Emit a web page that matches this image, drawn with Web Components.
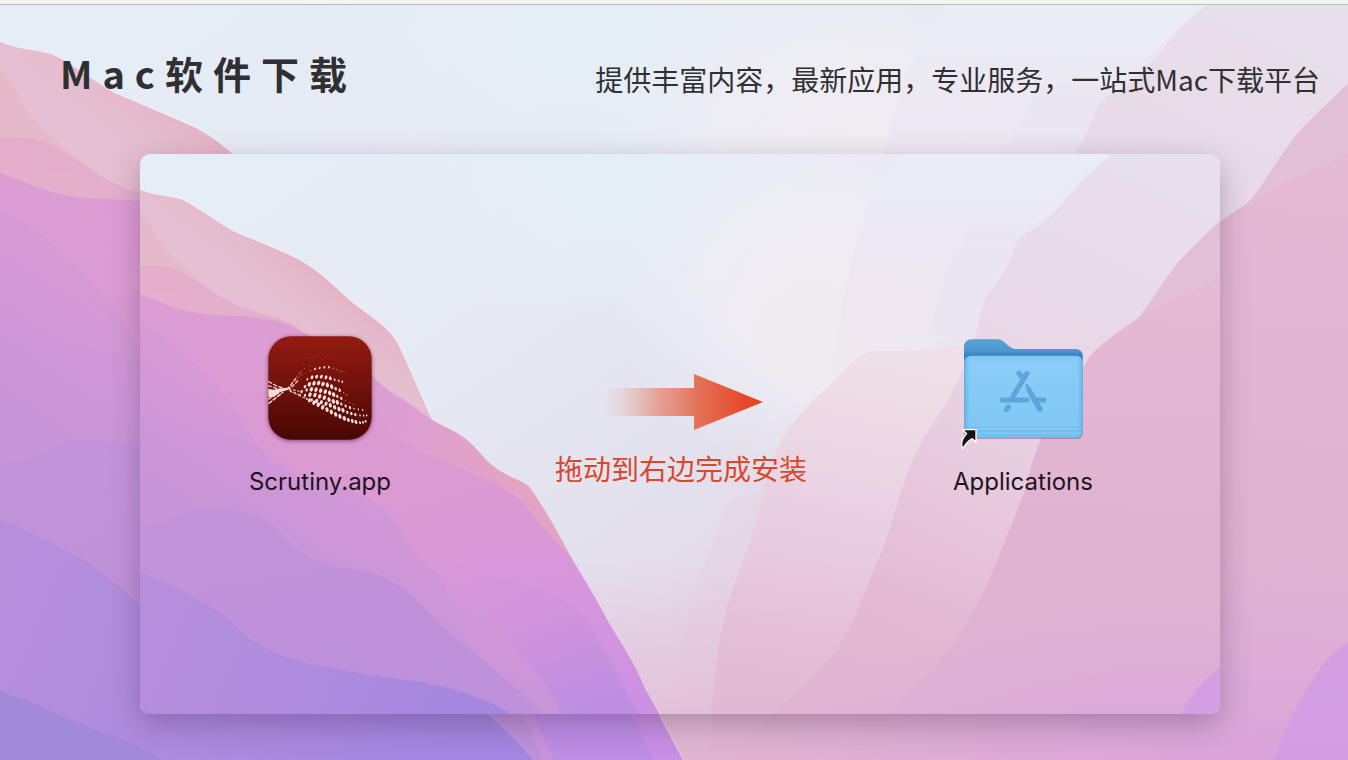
<!DOCTYPE html>
<html lang="zh-CN">
<head>
<meta charset="utf-8">
<title>Mac软件下载</title>
<style>
  html, body { margin: 0; }
  body { min-height: 100vh; display: flex; font-family: "Noto Sans CJK SC", sans-serif; color: #303033; }
</style>
</head>
<body>
<installer-page></installer-page>

<template id="wallpaper">
  <style>
    :host { display: block; overflow: hidden; }
    svg { display: block; width: 100%; height: 100%; }
  </style>
  <svg aria-hidden="true" preserveAspectRatio="none">
    <defs>
      <linearGradient id="sky" gradientUnits="userSpaceOnUse" x1="300" y1="150" x2="720" y2="760">
        <stop offset="0" stop-color="#e5edf6"/><stop offset=".35" stop-color="#e6e9f4"/>
        <stop offset=".62" stop-color="#e3e2ee"/><stop offset="1" stop-color="#e5d0e3"/>
      </linearGradient>
      <radialGradient id="blue"><stop offset="0" stop-color="#e4eff6"/><stop offset="1" stop-color="#e4eff6" stop-opacity="0"/></radialGradient>
      <radialGradient id="glow"><stop offset="0" stop-color="#f1eff4"/><stop offset=".5" stop-color="#f0eff5" stop-opacity=".7"/><stop offset="1" stop-color="#f1eff4" stop-opacity="0"/></radialGradient>
      <radialGradient id="petal" gradientUnits="userSpaceOnUse" cx="820" cy="330" r="170">
        <stop offset="0" stop-color="#f0eaf0"/><stop offset=".6" stop-color="#efecf3" stop-opacity=".7"/><stop offset="1" stop-color="#f0eef3" stop-opacity="0"/>
      </radialGradient>
      <linearGradient id="pale" gradientUnits="userSpaceOnUse" x1="860" y1="360" x2="790" y2="700">
        <stop offset="0" stop-color="#efdfe7"/><stop offset=".45" stop-color="#e9d0e1"/><stop offset="1" stop-color="#e3bcd4"/>
      </linearGradient>
      <linearGradient id="mist" gradientUnits="userSpaceOnUse" x1="900" y1="160" x2="900" y2="400">
        <stop offset="0" stop-color="#e9edf6"/><stop offset=".4" stop-color="#ede7f1"/><stop offset="1" stop-color="#efe0ea" stop-opacity="0"/>
      </linearGradient>
      <linearGradient id="r1" gradientUnits="userSpaceOnUse" x1="1120" y1="160" x2="860" y2="720">
        <stop offset="0" stop-color="#e7dfea"/><stop offset=".35" stop-color="#e9d7e6"/><stop offset=".6" stop-color="#e7c8dc"/><stop offset=".8" stop-color="#e4bad3"/><stop offset="1" stop-color="#e0b2d0"/>
      </linearGradient>
      <linearGradient id="r3" gradientUnits="userSpaceOnUse" x1="1150" y1="300" x2="1120" y2="764">
        <stop offset="0" stop-color="#e5b9d4"/><stop offset=".5" stop-color="#e0b4d0"/><stop offset="1" stop-color="#dbaad5"/>
      </linearGradient>
      <linearGradient id="floor" x1="0" y1="0" x2="0" y2="1">
        <stop offset="0" stop-color="#e2b8d3" stop-opacity="0"/><stop offset=".6" stop-color="#e2b8d3" stop-opacity=".55"/><stop offset="1" stop-color="#dfaed0"/>
      </linearGradient>
      <radialGradient id="dusk"><stop offset="0" stop-color="#d9a3dc"/><stop offset="1" stop-color="#d9a3dc" stop-opacity="0"/></radialGradient>
      <linearGradient id="a" gradientUnits="userSpaceOnUse" x1="250" y1="330" x2="320" y2="240">
        <stop offset="0" stop-color="#e5bfd4"/><stop offset=".5" stop-color="#e5bdcf"/><stop offset="1" stop-color="#e5abbe"/>
      </linearGradient>
      <linearGradient id="b" gradientUnits="userSpaceOnUse" x1="150" y1="400" x2="500" y2="520">
        <stop offset="0" stop-color="#dc9cd4"/><stop offset=".65" stop-color="#dd9fd3"/><stop offset="1" stop-color="#e3a3c5"/>
      </linearGradient>
      <linearGradient id="c" gradientUnits="userSpaceOnUse" x1="480" y1="470" x2="560" y2="764">
        <stop offset="0" stop-color="#db9ad1"/><stop offset=".45" stop-color="#d796dc"/><stop offset="1" stop-color="#c890e4"/>
      </linearGradient>
      <linearGradient id="c2" gradientUnits="userSpaceOnUse" x1="450" y1="540" x2="530" y2="740">
        <stop offset="0" stop-color="#d998d1" stop-opacity=".1"/><stop offset="1" stop-color="#bd8de4"/>
      </linearGradient>
      <linearGradient id="d" gradientUnits="userSpaceOnUse" x1="400" y1="340" x2="220" y2="600">
        <stop offset="0" stop-color="#dc9bd3"/><stop offset=".45" stop-color="#d499d6"/><stop offset="1" stop-color="#c292da"/>
      </linearGradient>
      <linearGradient id="e" gradientUnits="userSpaceOnUse" x1="220" y1="510" x2="300" y2="680">
        <stop offset="0" stop-color="#c393da"/><stop offset="1" stop-color="#bd90db"/>
      </linearGradient>
      <linearGradient id="f" gradientUnits="userSpaceOnUse" x1="160" y1="600" x2="500" y2="740">
        <stop offset="0" stop-color="#b68edc"/><stop offset=".6" stop-color="#ab8adf"/><stop offset="1" stop-color="#a386e1"/>
      </linearGradient>
    </defs>
    <rect x="130" y="140" width="1110" height="640" fill="url(#sky)"/>
    <ellipse cx="610" cy="180" rx="220" ry="150" fill="url(#blue)"/>
    <ellipse cx="830" cy="290" rx="220" ry="190" fill="url(#glow)"/>
    <path fill="url(#petal)" d="M640 150C660 230 676 255 693 281C715 315 735 338 757 364C770 380 776 390 785 396C795 404 815 404 835 392L960 330V150Z"/>
    <path fill="url(#mist)" d="M898 150C894 172 880 178 875 190C868 215 855 240 850 270C840 310 836 340 835 400L1000 400L1120 140H898Z"/>
    <path fill="#e9e4f1" opacity=".4" d="M1107 154L1041 224L968 224C964 250 952 256 947 270C938 300 935 320 925 335L975 337L1018 241Z"/>
    <path fill="#e7cfe0" opacity=".4" d="M730 500C705 555 702 580 690 604C680 630 678 690 672 764H800V480Z"/>
    <path fill="url(#pale)" d="M940 348C900 354 880 348 863 354C847 365 838 378 820 394C800 412 785 432 777 450C765 478 760 500 756 524C745 556 732 590 727 607C718 640 712 690 706 780H960L1000 340Z"/>
    <path fill="url(#r1)" d="M1116 150C1105 160 1100 165 1087 175C1070 195 1056 212 1041 224C1028 232 1022 234 1018 241C1012 252 1012 258 1006 268C996 286 985 296 983 306C978 325 974 345 964 368C953 392 942 410 929 430C917 448 910 465 906 478C896 503 890 535 880 555C868 583 860 608 849 629C840 650 820 670 800 690C770 715 740 740 715 780H1240V150Z"/>
    <path fill="#e2bfd6" d="M1240 200C1210 232 1190 248 1175 266C1160 286 1150 304 1137 319L1240 300Z"/>
    <path fill="url(#r3)" d="M1240 266C1210 285 1185 294 1167 302L1137 319C1120 330 1103 342 1090 356C1070 388 1055 415 1041 438C1030 464 1030 475 1024 492C1015 516 1010 528 1003 545C988 585 970 625 940 660C910 695 870 730 830 780H1240Z"/>
    <rect x="540" y="560" width="700" height="220" fill="url(#floor)"/>
    <ellipse cx="1180" cy="780" rx="420" ry="170" fill="url(#dusk)"/>
    <path fill="#d09be6" d="M1240 655C1218 667 1205 680 1198 687C1188 702 1172 725 1152 780H1240Z" opacity=".75"/>

    <path fill="url(#a)" stroke="#f1edf3" stroke-width="1" d="M130 184C143 191 150 193 157 194C168 196 175 197 182 199C200 208 216 221 232 230C255 240 278 249 297 258C320 270 337 289 355 304C369 314 390 328 398 343C410 367 422 398 433 420V770H130Z"/>
    <path fill="#e5b6c4" opacity=".65" d="M130 203C145 215 150 225 160 242C174 263 196 278 220 296L130 290Z"/>
    <path fill="#e3aac8" opacity=".75" d="M130 266C155 266 170 265 185 274C205 286 224 302 250 310C268 315 285 319 300 328L280 370H130Z"/>
    <path fill="url(#b)" d="M130 291C155 298 170 308 192 312C213 317 234 314 250 317C276 319 287 323 303 332C322 340 330 350 345 360C355 367 362 366 373 376C385 388 390 393 403 399C416 408 422 413 433 420C445 427 454 430 461 435C475 444 482 456 490 463C508 478 522 479 530 487C545 507 560 536 572 558L580 770H130Z"/>
    <path fill="url(#c)" d="M365 378C375 405 383 430 403 442C424 455 445 460 470 472C500 484 520 496 530 511C545 532 560 545 572 558C585 580 600 603 610 624C620 640 635 662 645 687L660 714L690 770H130V400Z"/>
    <path fill="url(#c2)" d="M400 520C440 560 480 575 530 585C560 595 580 611 595 633C613 662 626 694 640 717L666 770H300V500Z"/>
    <path fill="url(#d)" d="M130 321C155 329 172 341 187 356C200 369 210 375 220 388C237 409 244 422 253 437C265 455 273 463 290 472C320 484 350 487 365 498C391 508 405 532 412 548C420 566 436 570 446 580C475 610 525 650 555 700L590 780H130Z" opacity=".85"/>
    <path fill="#c494d9" opacity=".22" d="M130 414C160 422 200 435 230 437C260 442 275 458 298 470C330 489 365 490 380 507C410 530 403 550 440 574L470 650L130 620Z"/>
    <path fill="url(#e)" d="M130 527C165 529 180 510 200 508C222 506 250 511 268 521C282 530 285 541 300 551C330 572 363 565 384 577C412 589 427 613 450 633C480 656 520 690 560 730L580 780H130Z" opacity=".85"/>
    <path fill="url(#f)" d="M130 569C158 577 178 588 207 604C235 620 242 637 270 650C296 663 325 666 355 672C389 679 423 680 450 688C474 695 497 704 510 714C530 726 548 742 566 764L570 780H130Z"/>
    <path fill="#a18ad7" opacity=".9" d="M130 707C155 712 172 721 193 730C215 740 240 746 270 764V780H130Z"/>
    <path fill="none" stroke="#eee8f2" stroke-width="1" opacity=".5" d="M433 420C445 427 454 430 461 435C475 444 482 456 490 463C508 478 522 479 530 487C545 507 560 536 572 558C585 580 600 603 610 624C620 640 635 662 645 687L660 714L690 770"/>
  </svg>
</template>

<template id="page">
  <style>
    :host { flex: 1; display: grid; grid-template-rows: 5px 149px 1fr; min-width: 0; }
    .strip { grid-area: 1 / 1; background: #f3f6ec; border-bottom: 1px solid #b9bdca; z-index: 1; }
    wall-paper { grid-area: 1 / 1 / -1 / 1; }
    page-header { grid-area: 2 / 1; z-index: 1; }
    install-panel { grid-area: 3 / 1; margin: 0 128px 46px 140px; z-index: 1; }
  </style>
  <wall-paper view="140 156 1078 608"></wall-paper>
  <div class="strip"></div>
  <page-header>
    <span slot="title">Mac软件下载</span>
    <span slot="tagline">提供丰富内容，最新应用，专业服务，一站式Mac下载平台</span>
  </page-header>
  <install-panel>
    <install-item slot="source"><app-icon></app-icon><span slot="label">Scrutiny.app</span></install-item>
    <drag-hint slot="hint">拖动到右边完成安装</drag-hint>
    <install-item slot="target"><folder-icon></folder-icon><span slot="label">Applications</span></install-item>
  </install-panel>
</template>

<template id="header">
  <style>
    :host { display: block; }
    header { display: flex; justify-content: space-between; align-items: flex-start; padding: 38px 28px 0 60px; }
    h1, p { margin: 0; white-space: nowrap; }
    h1 { font-size: 38px; line-height: 60px; font-weight: 700; letter-spacing: 10px; }
    p { font-size: 28px; line-height: 72px; }
  </style>
  <header>
    <h1><slot name="title"></slot></h1>
    <p><slot name="tagline"></slot></p>
  </header>
</template>

<template id="panel">
  <style>
    :host { display: grid; border-radius: 10px; box-shadow: 0 10px 30px rgba(50, 25, 60, .3); }
    wall-paper { grid-area: 1 / 1; border-radius: inherit; }
    main { grid-area: 1 / 1; z-index: 1; display: grid; grid-template-columns: 360fr 362fr 322fr; justify-items: center; align-items: start; padding: 182px 36px 0 0; }
  </style>
  <wall-paper view="140 154 1080 560"></wall-paper>
  <main>
    <slot name="source"></slot>
    <slot name="hint"></slot>
    <slot name="target"></slot>
  </main>
</template>

<template id="item">
  <style>
    :host { display: block; }
    figure { margin: 0; display: grid; grid-template-rows: 114px 32px; row-gap: 16px; justify-items: center; }
    figcaption { font: 24px/32px Inter, sans-serif; color: #1d1420; white-space: nowrap; }
  </style>
  <figure>
    <slot></slot>
    <figcaption><slot name="label"></slot></figcaption>
  </figure>
</template>

<template id="hint">
  <style>
    :host { display: grid; justify-items: center; row-gap: 18px; padding-top: 38px; }
    svg { display: block; }
    p { margin: 0; font-size: 28px; line-height: 40px; color: #d9482c; white-space: nowrap; }
  </style>
  <svg width="164" height="56" viewBox="-4 0 164 56" aria-hidden="true">
    <defs><linearGradient id="g" gradientUnits="userSpaceOnUse" x1="0" y1="0" x2="160" y2="0">
      <stop offset="0" stop-color="#e88870" stop-opacity="0"/><stop offset=".12" stop-color="#e68b78" stop-opacity=".18"/>
      <stop offset=".35" stop-color="#e67c64" stop-opacity=".65"/><stop offset=".6" stop-color="#e4694d" stop-opacity=".94"/>
      <stop offset=".9" stop-color="#e54725"/><stop offset="1" stop-color="#e54725"/>
    </linearGradient></defs>
    <path fill="url(#g)" d="M0 14H91V0L160 28L91 56V42H0Z"/>
  </svg>
  <p><slot></slot></p>
</template>

<template id="app">
  <style>
    :host { display: block; }
    svg { display: block; filter: drop-shadow(0 1px 2px rgba(40, 0, 20, .55)); }
  </style>
  <svg width="104" height="104" viewBox="54 48 312 312" role="img" aria-label="Scrutiny">
    <defs>
      <linearGradient id="g" x1="0" y1="0" x2="0" y2="1"><stop offset="0" stop-color="#931b11"/><stop offset=".5" stop-color="#70110b"/><stop offset="1" stop-color="#480703"/></linearGradient>
      <clipPath id="k"><rect x="55" y="49" width="310" height="310" rx="68"/></clipPath>
    </defs>
    <rect x="55" y="49" width="310" height="310" rx="68" fill="url(#g)"/>
    <g clip-path="url(#k)">
      <g id="dots" fill="#fde4e2"></g>
      <path fill="#fbdcd9" d="M52 206L70 209L92 205L110 205L120 200L112 210L90 217L74 228L64 232L52 230Z"/>
      <g fill="none" stroke="#f8d2ce" stroke-linecap="round">
        <path stroke-width="4" stroke-dasharray="10 7" d="M56 185L78 197L108 207M54 197L80 205"/>
        <path stroke-width="5" stroke-dasharray="10 7" d="M54 238L84 220M56 250L80 232L98 217"/>
        <path stroke-width="4" stroke-dasharray="9 7" d="M110 206C122 200 128 186 137 176M112 208C127 203 135 190 148 178"/>
        <path stroke-width="2" stroke-dasharray="5 7" opacity=".7" d="M124 190L154 152M136 183L160 158"/>
        <path stroke-width="3" stroke-dasharray="7 7" d="M116 206L148 214M118 210L154 227M120 214L172 238"/>
      </g>
    </g>
  </svg>
</template>

<template id="folder">
  <style>
    :host { display: block; }
    svg { display: block; }
    .body { filter: drop-shadow(0 2px 2px rgba(60, 30, 70, .5)); }
  </style>
  <svg width="128" height="114" viewBox="60 48 384 342" role="img" aria-label="Applications">
    <defs>
      <linearGradient id="back" x1="0" y1="0" x2="0" y2="1"><stop offset="0" stop-color="#58a3d5"/><stop offset=".12" stop-color="#4c96cf"/><stop offset=".17" stop-color="#337dc4"/></linearGradient>
      <linearGradient id="front" x1="0" y1="0" x2="0" y2="1"><stop offset="0" stop-color="#80c8f4"/><stop offset=".1" stop-color="#8acdf7"/><stop offset=".85" stop-color="#80c8f4"/><stop offset="1" stop-color="#6fbceb"/></linearGradient>
      <linearGradient id="side" x1="0" y1="0" x2="1" y2="0"><stop offset="0" stop-color="#5eb0e5" stop-opacity=".8"/><stop offset=".05" stop-color="#6ebbea" stop-opacity="0"/><stop offset=".95" stop-color="#6ebbea" stop-opacity="0"/><stop offset="1" stop-color="#5eb0e5" stop-opacity=".8"/></linearGradient>
    </defs>
    <g class="body">
      <path fill="url(#back)" d="M75 82Q75 58 100 58H172C190 58 196 68 208 77C220 87 226 87 240 87H408Q431 87 431 108V332Q431 354 408 354H96Q75 354 75 332Z"/>
      <path fill="url(#front)" d="M76 128Q76 107 98 107H409Q431 107 431 128V332Q431 354 409 354H96Q76 354 76 332Z"/>
      <path fill="url(#side)" d="M76 128Q76 107 98 107H409Q431 107 431 128V332Q431 354 409 354H96Q76 354 76 332Z"/>
    </g>
    <path stroke="#63b0df" stroke-width="2" d="M78 323H429M78 336H429"/>
    <path stroke="#98d5fa" stroke-width="2" d="M78 326H429M78 339H429"/>
    <g fill="none" stroke="#5da5da" stroke-width="15" stroke-linecap="round">
      <path d="M264 160L222 229M240 160L251 174"/>
      <path d="M190 240H264" /><path d="M290 240H315"/>
      <path d="M202 269L208 261"/>
    </g>
    <path fill="#5da5da" d="M262 190C270 197 276 205 281 214L309 262C316 275 301 281 295 271L266 219C260 208 258 198 262 190Z"/>
    <path fill="#161216" stroke="#fff" stroke-width="4" stroke-linejoin="round" d="M71 329H111V366L100 356C86 362 80 373 71 386C65 372 68 357 83 341Z"/>
  </svg>
</template>

<script>
  function define(name, templateId, setup) {
    customElements.define(name, class extends HTMLElement {
      constructor() {
        super();
        this.attachShadow({ mode: 'open' })
          .append(document.getElementById(templateId).content.cloneNode(true));
      }
      connectedCallback() { if (setup) setup(this); }
    });
  }

  // Each halftone row: dot width, then x/y pairs.
  const rows = [
    [1, 160,128, 176,116, 192,109, 206,106, 220,105, 234,106, 248,110],
    [1.2, 150,157, 164,145, 178,136, 282,155],
    [2.6, 195,147, 209,144, 223,142, 237,142],
    [1.8, 181,152, 250,145, 261,149, 273,154],
    [4, 186,172, 200,170, 214,170, 228,172, 241,175],
    [2.6, 172,178, 254,179, 266,182, 277,185],
    [4.8, 178,193, 192,190, 206,189, 219,192, 232,195, 245,200],
    [3.6, 165,200, 257,206, 269,211],
    [1.8, 281,218, 290,225],
    [4.8, 184,208, 198,209, 212,212, 226,215, 239,219, 251,224],
    [3.4, 155,215, 170,210, 262,229, 274,235],
    [1.4, 286,241, 298,247, 310,253],
    [4.8, 180,224, 195,225, 209,229, 223,233, 237,239, 250,244, 262,247],
    [3.2, 165,226, 274,252, 287,258, 300,263],
    [2, 150,224, 312,266, 325,268, 338,270],
    [4.6, 200,243, 214,247, 228,251, 241,256, 254,262, 267,267, 279,271],
    [3.4, 185,240, 292,277, 304,281, 316,284],
    [2.2, 170,236, 330,286, 341,287, 350,286],
    [4.8, 192,248, 205,254, 218,262, 231,269, 244,276, 257,283, 270,289, 283,295],
    [4.2, 178,241, 295,300, 307,303, 318,306],
    [2.8, 330,308, 339,307, 347,304]
  ];

  define('wall-paper', 'wallpaper', el =>
    el.shadowRoot.querySelector('svg').setAttribute('viewBox', el.getAttribute('view')));
  define('page-header', 'header');
  define('install-panel', 'panel');
  define('install-item', 'item');
  define('drag-hint', 'hint');
  define('app-icon', 'app', el => {
    const dots = el.shadowRoot.getElementById('dots');
    for (const [r, ...points] of rows)
      for (let i = 0; i < points.length; i += 2) {
        const dot = document.createElementNS('http://www.w3.org/2000/svg', 'ellipse');
        const [x, y] = [points[i], points[i + 1]];
        dot.setAttribute('rx', r);
        dot.setAttribute('ry', r * 1.5);
        dot.setAttribute('transform', `translate(${x} ${y}) rotate(${x < 230 ? 20 : -15})`);
        if (r < 2) dot.setAttribute('opacity', '.55');
        dots.append(dot);
      }
  });
  define('folder-icon', 'folder');
  define('installer-page', 'page');
</script>
</body>
</html>
